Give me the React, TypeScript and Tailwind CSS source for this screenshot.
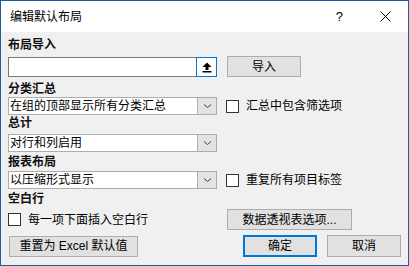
import React from "react";

const font = { fontFamily: '"Liberation Sans","Noto Sans CJK SC",sans-serif' };

function Chevron() {
  return (
    <svg width="9" height="6" viewBox="0 0 9 6">
      <path d="M1 1.5 L4.5 4.5 L8 1.5" fill="none" stroke="#404040" strokeWidth="1" />
    </svg>
  );
}

function Select({ text }: { text: string }) {
  return (
    <div className="flex h-[18px] w-[209px] border border-[#adadad] bg-white">
      <div className="flex flex-1 items-center pl-[1px] text-[12px] leading-none text-black">{text}</div>
      <div className="flex w-[19px] items-center justify-center border-l border-[#adadad] bg-[#e3e3e3]">
        <Chevron />
      </div>
    </div>
  );
}

function Check({ label }: { label: string }) {
  return (
    <div className="flex items-center">
      <div className="h-[13px] w-[13px] border border-[#333] bg-white" />
      <span className="ml-[7px] text-[12px] leading-none text-black">{label}</span>
    </div>
  );
}

function Label({ text, cls }: { text: string; cls: string }) {
  return <div className={`h-[16px] text-[12px] font-bold leading-[16px] text-[#111] ${cls}`}>{text}</div>;
}

export default function App() {
  return (
    <div style={font} className="flex h-[266px] w-[409px] flex-col border border-[#1f5b9a] bg-[#f0f0f0]">
      <div className="flex h-[31px] items-center bg-white">
        <span className="ml-[9px] text-[12px] text-black">编辑默认布局</span>
        <span className="ml-auto text-[13px] text-black">?</span>
        <svg className="ml-[37px] mr-[17px]" width="11" height="11" viewBox="0 0 11 11">
          <path d="M0.5 0.5 L10.5 10.5 M10.5 0.5 L0.5 10.5" stroke="#000" strokeWidth="1" />
        </svg>
      </div>
      <div className="flex flex-col pl-[7px]">
        <Label text="布局导入" cls="mt-[5px]" />
        <div className="mt-[3px] flex h-[21px] items-start">
          <div className="mt-px flex h-[20px] w-[209px] border border-[#7a7a7a] bg-white">
            <div className="flex-1" />
            <div className="-my-px -mr-px flex w-[21px] items-center justify-center border border-[#0078d7] bg-white">
              <svg width="10" height="11" viewBox="0 0 10 11">
                <path d="M5 0.5 L9.5 5 L6.5 5 L6.5 8 L3.5 8 L3.5 5 L0.5 5 Z" fill="#000" />
                <rect x="0.5" y="9" width="9" height="1.5" fill="#000" />
              </svg>
            </div>
          </div>
          <div className="ml-[10px] flex h-[21px] w-[74px] items-center justify-center border border-[#adadad] bg-[#e1e1e1] text-[12px] text-black">
            导入
          </div>
        </div>
        <Label text="分类汇总" cls="mt-[4px]" />
        <div className="flex h-[18px] items-center">
          <Select text="在组的顶部显示所有分类汇总" />
          <div className="ml-[9px]">
            <Check label="汇总中包含筛选项" />
          </div>
        </div>
        <Label text="总计" cls="" />
        <div className="mt-[3px]">
          <Select text="对行和列启用" />
        </div>
        <Label text="报表布局" cls="mt-[2px]" />
        <div className="mt-px flex h-[18px] items-center">
          <Select text="以压缩形式显示" />
          <div className="ml-[9px]">
            <Check label="重复所有项目标签" />
          </div>
        </div>
        <Label text="空白行" cls="mt-[2px]" />
        <div className="mt-[2px] flex h-[21px] items-center">
          <div className="w-[209px]">
            <Check label="每一项下面插入空白行" />
          </div>
          <div className="ml-[10px] flex h-[21px] w-[125px] items-center justify-center border border-[#adadad] bg-[#e1e1e1] text-[12px] text-black">
            数据透视表选项...
          </div>
        </div>
        <div className="mt-[5px] flex h-[22px] items-center">
          <div className="ml-px flex h-[21px] w-[129px] items-center justify-center border border-[#adadad] bg-[#e1e1e1] text-[12px] text-black">
            重置为 Excel 默认值
          </div>
          <div className="ml-[105px] flex h-[22px] w-[74px] items-center justify-center border-2 border-[#0078d7] bg-[#e1e1e1] text-[12px] text-black">
            确定
          </div>
          <div className="ml-[10px] flex h-[22px] w-[74px] items-center justify-center border border-[#adadad] bg-[#e1e1e1] text-[12px] text-black">
            取消
          </div>
        </div>
      </div>
    </div>
  );
}
